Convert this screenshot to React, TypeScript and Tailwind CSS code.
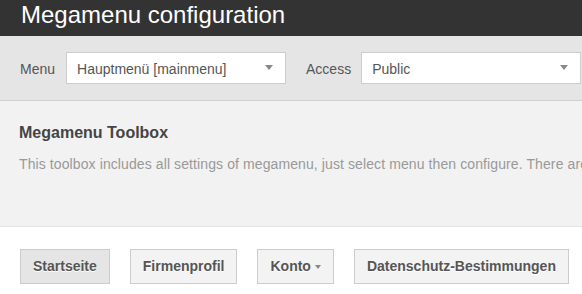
const menus = ["Startseite", "Firmenprofil", "Konto", "Datenschutz-Bestimmungen"];

function SelectBox({ value, width }: { value: string; width: string }) {
  return (
    <div
      className={`relative flex items-center h-[32px] ${width} bg-white border border-[#cccccc] pl-[10px] pt-[2px] text-[14px] text-[#555555]`}
    >
      {value}
      {/* caret */}
      <span className="absolute right-[12px] top-[12px] w-0 h-0 border-l-[4px] border-r-[4px] border-t-[5px] border-l-transparent border-r-transparent border-t-[#888888]" />
    </div>
  );
}

export default function App() {
  return (
    <div className="w-[582px] h-[294px] overflow-hidden bg-white font-['Liberation_Sans',Arial,sans-serif]">
      {/* Header */}
      <div className="h-[36px] bg-[#333333] pl-[21px] text-white text-[24px] leading-[30px] whitespace-nowrap">
        Megamenu configuration
      </div>

      {/* Toolbar */}
      <div className="h-[65px] bg-[#e5e5e5] border-b border-[#d0d0d0] flex items-center pl-[20px] text-[14px] text-[#555555] whitespace-nowrap">
        <span className="pt-[3px] mr-[11px]">Menu</span>
        <SelectBox value="Hauptmenü [mainmenu]" width="w-[220px] shrink-0" />
        <span className="pt-[3px] ml-[20px] mr-[10px]">Access</span>
        <SelectBox value="Public" width="w-[220px] shrink-0" />
      </div>

      {/* Toolbox */}
      <div className="h-[126px] bg-[#f2f2f2] border-b border-[#e3e3e3] pl-[19px] pt-[21px] whitespace-nowrap overflow-hidden">
        <h2 className="text-[16px] font-bold text-[#444444] leading-[22px]">Megamenu Toolbox</h2>
        <p className="mt-[11px] text-[14px] tracking-[0.1px] text-[#999999] leading-[18px]">
          This toolbox includes all settings of megamenu, just select menu then configure. There are
          many options to customize your megamenu.
        </p>
      </div>

      {/* Menu buttons */}
      <div className="flex gap-[20px] pl-[20px] pt-[22px] whitespace-nowrap">
        {menus.map((m, i) => (
          <button
            key={m}
            className={`h-[35px] px-[12px] border border-[#cccccc] text-[14px] font-bold text-[#555555] [text-shadow:0_1px_0_#ffffff] flex items-center ${
              i === 0 ? "bg-[#e5e5e5]" : "bg-[#f3f3f3]"
            }`}
          >
            {m}
            {m === "Konto" && (
              <span className="ml-[4px] w-0 h-0 border-l-[3px] border-r-[3px] border-t-[4px] border-l-transparent border-r-transparent border-t-[#888888]" />
            )}
          </button>
        ))}
      </div>
    </div>
  );
}
